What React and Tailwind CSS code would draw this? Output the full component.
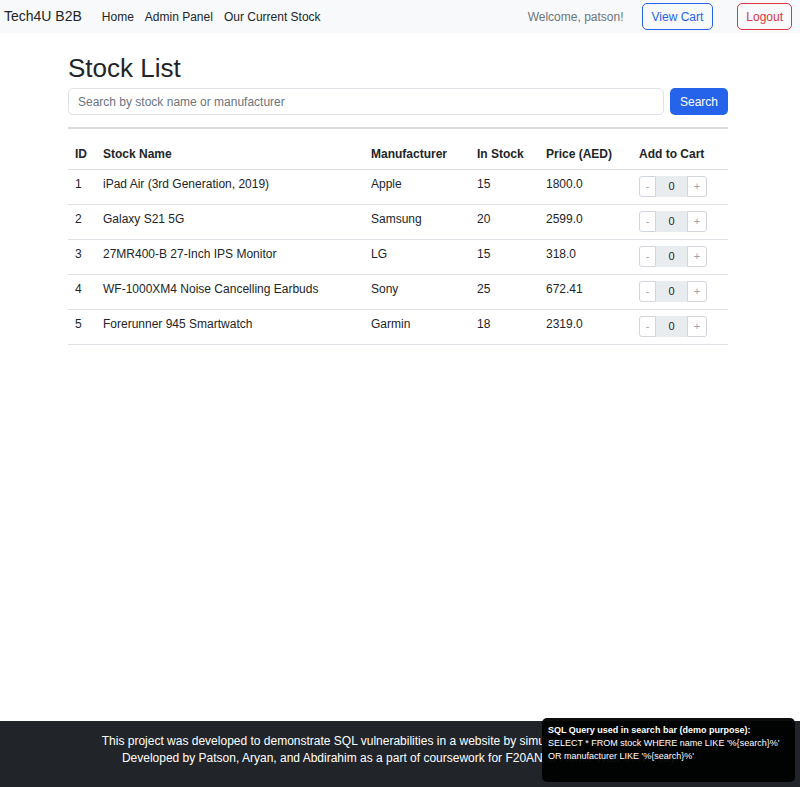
import { useState } from "react";

const stock = [
  { id: 1, name: "iPad Air (3rd Generation, 2019)", maker: "Apple", qty: 15, price: "1800.0" },
  { id: 2, name: "Galaxy S21 5G", maker: "Samsung", qty: 20, price: "2599.0" },
  { id: 3, name: "27MR400-B 27-Inch IPS Monitor", maker: "LG", qty: 15, price: "318.0" },
  { id: 4, name: "WF-1000XM4 Noise Cancelling Earbuds", maker: "Sony", qty: 25, price: "672.41" },
  { id: 5, name: "Forerunner 945 Smartwatch", maker: "Garmin", qty: 18, price: "2319.0" },
];

function QtyPicker() {
  const [count, setCount] = useState(0);
  return (
    <div className="flex h-[21px] items-stretch text-[11px]">
      <button
        className="w-[17px] rounded-l-[3px] border border-gray-300 bg-white text-gray-400"
        onClick={() => setCount((c) => Math.max(0, c - 1))}
      >
        -
      </button>
      <span className="flex w-[31px] items-center justify-center bg-[#e9ecef] text-[#212529]">{count}</span>
      <button
        className="w-[20px] rounded-r-[3px] border border-gray-300 bg-white text-gray-400"
        onClick={() => setCount((c) => c + 1)}
      >
        +
      </button>
    </div>
  );
}

export default function App() {
  return (
    <div className="flex min-h-[787px] flex-col bg-white font-['Liberation_Sans',Arial,sans-serif] text-[#212529]">
      <nav className="flex h-[33px] items-center bg-[#f8f9fa] pl-[4px] pr-[8px]">
        <span className="text-[14px]">Tech4U B2B</span>
        <div className="ml-[20px] flex gap-[11px] text-[12px]">
          <a>Home</a>
          <a>Admin Panel</a>
          <a>Our Current Stock</a>
        </div>
        <span className="ml-auto text-[12px] text-[#6c757d]">Welcome, patson!</span>
        <button className="ml-[18px] h-[27px] rounded-[5px] border border-[#2563eb] px-[9px] text-[12px] text-[#2563eb]">
          View Cart
        </button>
        <button className="ml-[24px] h-[27px] rounded-[5px] border border-[#dc3545] px-[8px] text-[12px] text-[#dc3545]">
          Logout
        </button>
      </nav>

      <main className="ml-[68px] w-[660px] flex-1 pt-[20px]">
        <h1 className="text-[26px] leading-[30px]">Stock List</h1>
        <div className="mt-[5px] flex gap-[6px]">
          <input
            className="h-[27px] flex-1 rounded-[5px] border border-[#dee2e6] px-[9px] text-[12px] placeholder:text-[#6c757d]"
            placeholder="Search by stock name or manufacturer"
          />
          <button className="h-[27px] rounded-[5px] bg-[#2563eb] px-[10px] text-[12px] text-white">Search</button>
        </div>
        <hr className="mt-[12px] border-t-2 border-[#d9dadb]" />
        <table className="mt-[11px] w-full border-collapse text-[12px]">
          <thead>
            <tr className="h-[29px] border-b border-[#dee2e6] text-left">
              <th className="w-[28px] pl-[7px] font-bold">ID</th>
              <th className="w-[268px] pl-[7px] font-bold">Stock Name</th>
              <th className="w-[106px] pl-[7px] font-bold">Manufacturer</th>
              <th className="w-[69px] pl-[7px] font-bold">In Stock</th>
              <th className="w-[93px] pl-[7px] font-bold">Price (AED)</th>
              <th className="pl-[7px] font-bold">Add to Cart</th>
            </tr>
          </thead>
          <tbody>
            {stock.map((item) => (
              <tr key={item.id} className="h-[35px] border-b border-[#dee2e6]">
                <td className="pb-[5px] pl-[7px]">{item.id}</td>
                <td className="pb-[5px] pl-[7px]">{item.name}</td>
                <td className="pb-[5px] pl-[7px]">{item.maker}</td>
                <td className="pb-[5px] pl-[7px]">{item.qty}</td>
                <td className="pb-[5px] pl-[7px]">{item.price}</td>
                <td className="pl-[7px]">
                  <QtyPicker />
                </td>
              </tr>
            ))}
          </tbody>
        </table>
      </main>

      <footer className="relative h-[66px] bg-[#212529] pt-[12px] text-center text-[12px] leading-[17px] text-white">
        <p>This project was developed to demonstrate SQL vulnerabilities in a website by simulating a real-world B2B shop.</p>
        <p>Developed by Patson, Aryan, and Abdirahim as a part of coursework for F20AN at Heriot-Watt University.</p>
        <div className="absolute right-[5px] top-[-3px] h-[64px] w-[253px] whitespace-nowrap rounded-[5px] bg-black/95 px-[6px] pt-[6px] text-left text-[9px] leading-[13px] text-white">
          <p className="font-bold">SQL Query used in search bar (demo purpose):</p>
          <p>SELECT * FROM stock WHERE name LIKE '%{"{"}search{"}"}%'</p>
          <p>OR manufacturer LIKE '%{"{"}search{"}"}%'</p>
        </div>
      </footer>
    </div>
  );
}
